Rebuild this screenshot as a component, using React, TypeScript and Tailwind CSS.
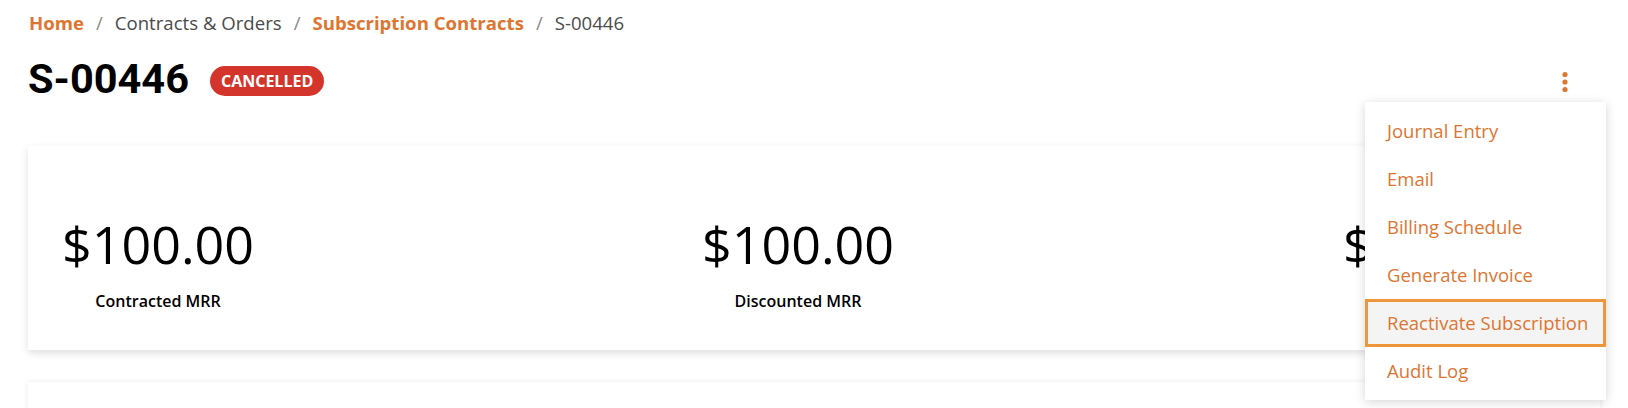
import { Fragment } from "react";

const crumbs = [
  { label: "Home", link: true },
  { label: "Contracts & Orders", link: false },
  { label: "Subscription Contracts", link: true },
  { label: "S-00446", link: false },
];

const stats = [
  { value: "$100.00", label: "Contracted MRR" },
  { value: "$100.00", label: "Discounted MRR" },
  { value: "$100.00", label: "Annual Value" },
];

const menuItems = [
  "Journal Entry",
  "Email",
  "Billing Schedule",
  "Generate Invoice",
  "Reactivate Subscription",
  "Audit Log",
];

function KebabIcon() {
  return (
    <svg width="8" height="24" viewBox="0 0 8 24" fill="#dd7631">
      <circle cx="4" cy="4.5" r="2.6" />
      <circle cx="4" cy="12" r="2.6" />
      <circle cx="4" cy="19.5" r="2.6" />
    </svg>
  );
}

export default function App() {
  return (
    <main
      className="relative h-[408px] w-full overflow-hidden bg-white px-7 pt-[11px]"
      style={{ fontFamily: '"Open Sans", "Noto Sans", sans-serif' }}
    >
      {/* Breadcrumbs */}
      <nav className="flex items-center text-[18.6px] leading-6 pl-px">
        {crumbs.map((c, i) => (
          <Fragment key={c.label}>
            {i > 0 && <span className="mx-[12px] text-[#8a8a8a]">/</span>}
            <span className={c.link ? "font-bold text-[#dd7631]" : "text-[#4b4b4b]"}>{c.label}</span>
          </Fragment>
        ))}
      </nav>

      {/* Title row */}
      <div className="mt-5 flex h-12 items-center justify-between">
        <div className="flex items-center gap-[21px]">
          <h1
            className="text-[41.5px] font-bold leading-[48px] text-black"
            style={{ fontFamily: "Roboto, Arial, sans-serif" }}
          >
            S-00446
          </h1>
          <span className="mt-[3px] flex h-[30px] items-center rounded-full bg-[#d3342b] px-[11px] text-[16px] font-bold uppercase text-white">
            Cancelled
          </span>
        </div>
        <button className="mr-[29px] mt-[5px] flex h-8 w-3 items-center justify-center">
          <KebabIcon />
        </button>
      </div>

      {/* Stats card */}
      <section className="mt-[43px] h-[204px] bg-white pl-[34px] pt-[68px] shadow-[0_3px_8px_rgba(0,0,0,0.13)]">
        <div className="grid grid-cols-[640px_641px_1fr]">
          {stats.map((s) => (
            <div key={s.label + s.value} className="flex">
              <div className="flex flex-col items-center">
                <span className="text-[52px] leading-[60px] text-black">{s.value}</span>
                <span className="mt-[15px] text-[16px] font-semibold leading-6 text-black">{s.label}</span>
              </div>
            </div>
          ))}
        </div>
      </section>

      {/* Next card */}
      <section className="mt-8 h-[60px] bg-white shadow-[0_0_6px_rgba(0,0,0,0.08)]" />

      {/* Actions dropdown */}
      <div className="absolute right-[22px] top-[102px] w-[241px] bg-white py-[5px] shadow-[0_2px_10px_rgba(0,0,0,0.16)]">
        {menuItems.map((m) => (
          <div
            key={m}
            className={
              m === "Reactivate Subscription"
                ? "flex h-12 items-center whitespace-nowrap bg-[#f4f4f4] pl-[22px] text-[18.5px] text-[#dd7631] ring-3 ring-inset ring-[#f0963a]"
                : "flex h-12 items-center whitespace-nowrap pl-[22px] text-[18.5px] text-[#dd7631]"
            }
          >
            {m}
          </div>
        ))}
      </div>
    </main>
  );
}
